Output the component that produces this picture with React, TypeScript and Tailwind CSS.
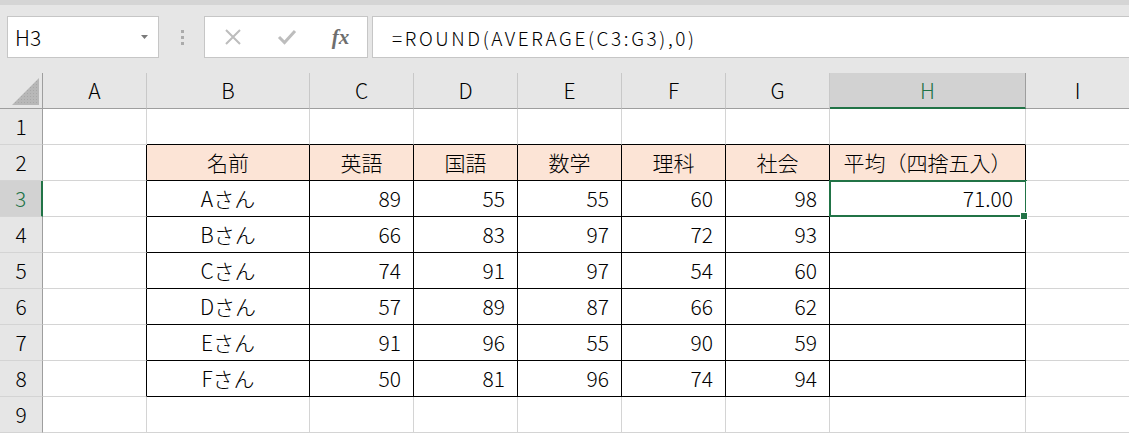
import React from "react";

const COLS = [
  { key: "A", w: "w-[104px]" },
  { key: "B", w: "w-[163px]" },
  { key: "C", w: "w-[104px]" },
  { key: "D", w: "w-[104px]" },
  { key: "E", w: "w-[104px]" },
  { key: "F", w: "w-[104px]" },
  { key: "G", w: "w-[104px]" },
  { key: "H", w: "w-[196px]" },
  { key: "I", w: "w-[104px]" },
];

const HEADERS = ["名前", "英語", "国語", "数学", "理科", "社会", "平均（四捨五入）"];
const DATA: [string, number[]][] = [
  ["Aさん", [89, 55, 55, 60, 98]],
  ["Bさん", [66, 83, 97, 72, 93]],
  ["Cさん", [74, 91, 97, 54, 60]],
  ["Dさん", [57, 89, 87, 66, 62]],
  ["Eさん", [91, 96, 55, 90, 59]],
  ["Fさん", [50, 81, 96, 74, 94]],
];

function cellContent(r: number, c: number): { text: string; align: "center" | "right" } | null {
  if (r === 2 && c >= 1 && c <= 7) return { text: HEADERS[c - 1], align: "center" };
  if (r >= 3 && r <= 8) {
    const row = DATA[r - 3];
    if (c === 1) return { text: row[0], align: "center" };
    if (c >= 2 && c <= 6) return { text: String(row[1][c - 2]), align: "right" };
    if (c === 7 && r === 3) return { text: "71.00", align: "right" };
  }
  return null;
}

function Cell({ r, c }: { r: number; c: number }) {
  const col = COLS[c];
  const inTableRow = r >= 2 && r <= 8;
  const rightBlack = inTableRow && c >= 0 && c <= 7;
  const bottomBlack = r >= 1 && r <= 8 && c >= 1 && c <= 7;
  const fill = r === 2 && c >= 1 && c <= 7;
  const content = cellContent(r, c);
  const selected = r === 3 && c === 7;
  return (
    <div
      className={`relative shrink-0 h-full ${col.w} border-r border-b ${
        rightBlack ? "border-r-black" : "border-r-[#d4d4d4]"
      } ${bottomBlack ? "border-b-black" : "border-b-[#d4d4d4]"} ${
        fill ? "bg-[#fce4d6]" : "bg-white"
      } flex items-center ${
        content?.align === "right" ? "justify-end pr-[12px]" : "justify-center"
      } text-[21px] text-black leading-none`}
    >
      {content ? <span>{content.text}</span> : null}
      {selected ? (
        <>
          <div className="absolute -left-[1px] -top-[1px] w-[198px] h-[37px] border-2 border-[#217346] pointer-events-none" />
          <div className="absolute -right-[3px] -bottom-[4px] w-[8px] h-[8px] bg-white flex items-center justify-center z-10">
            <div className="w-[6px] h-[6px] bg-[#217346]" />
          </div>
        </>
      ) : null}
    </div>
  );
}

function RowHeader({ n }: { n: number }) {
  const sel = n === 3;
  return (
    <div
      className={`shrink-0 w-[43px] h-full border-b border-b-[#d4d4d4] ${
        sel ? "bg-[#d2d2d2] border-r-2 border-r-[#217346] text-[#217346]" : "bg-[#e6e6e6] border-r border-r-[#9e9e9e] text-black"
      } flex items-center justify-center text-[21px] leading-none`}
    >
      {n}
    </div>
  );
}

export default function App() {
  return (
    <div className="w-[1129px] h-[433px] overflow-hidden bg-[#e6e6e6] font-['Noto_Sans_CJK_JP','Noto_Sans',sans-serif] font-light select-none">
      {/* toolbar */}
      <div className="h-[73px] flex flex-col">
        <div className="h-[5px] bg-[#d5d5d5]" />
        <div className="flex items-start pt-[11px]">
          <div className="ml-[7px] w-[152px] h-[42px] bg-white border border-[#c6c6c6] flex items-center justify-between pl-[7px] pr-[10px]">
            <span className="text-[21px] leading-none text-black">H3</span>
            <svg width="7" height="4" viewBox="0 0 7 4">
              <path d="M0 0 L7 0 L3.5 4 Z" fill="#7a7a7a" />
            </svg>
          </div>
          <div className="w-[45px] h-[42px] flex flex-col items-center justify-center gap-[3px] pl-[2px]">
            <div className="w-[3px] h-[3px] bg-[#ababab]" />
            <div className="w-[3px] h-[3px] bg-[#ababab]" />
            <div className="w-[3px] h-[3px] bg-[#ababab]" />
          </div>
          <div className="w-[164px] h-[42px] bg-white border border-[#c6c6c6] flex items-center">
            <div className="w-[55px] flex justify-center pl-[1px]">
              <svg width="18" height="18" viewBox="0 0 18 18">
                <path d="M2 2 L16 16 M16 2 L2 16" stroke="#bdbdbd" strokeWidth="2" fill="none" />
              </svg>
            </div>
            <div className="w-[54px] flex justify-center">
              <svg width="20" height="18" viewBox="0 0 20 18">
                <path d="M2 9 L7.5 14.5 L18 3" stroke="#bdbdbd" strokeWidth="3" fill="none" />
              </svg>
            </div>
            <div className="w-[53px] flex justify-center">
              <span className="font-['Liberation_Serif',serif] italic font-bold text-[21px] leading-none text-[#6e6e6e]">
                fx
              </span>
            </div>
          </div>
          <div className="ml-[4px] flex-1 h-[42px] bg-white border border-[#c6c6c6] border-r-0 flex items-center pl-[19px]">
            <span className="text-[19px] leading-none text-black tracking-[2.6px]">=ROUND(AVERAGE(C3:G3),0)</span>
          </div>
        </div>
      </div>

      {/* column header row */}
      <div className="flex h-[36px]">
        <div className="relative shrink-0 w-[43px] h-full bg-[#e6e6e6] border-r border-b border-[#9e9e9e]">
          <svg className="absolute left-[12px] top-[5px]" width="27" height="27" viewBox="0 0 27 27">
            <defs>
              <pattern id="dots" width="3" height="3" patternUnits="userSpaceOnUse">
                <rect width="3" height="3" fill="#b8b8b8" />
                <rect width="1" height="1" fill="#a8a8a8" />
              </pattern>
            </defs>
            <path d="M27 0 L27 27 L0 27 Z" fill="url(#dots)" />
          </svg>
        </div>
        {COLS.map((col, i) => {
          const sel = col.key === "H";
          return (
            <div
              key={col.key}
              className={`shrink-0 h-full ${col.w} ${
                sel
                  ? "bg-[#d2d2d2] border-b-2 border-b-[#217346] border-r border-r-[#9e9e9e] text-[#217346]"
                  : "bg-[#e6e6e6] border-b border-b-[#9e9e9e] border-r border-r-[#c8c8c8] text-black"
              } ${i === 6 ? "border-r-[#9e9e9e]" : ""} flex items-center justify-center text-[21px] leading-none`}
            >
              {col.key}
            </div>
          );
        })}
      </div>

      {/* rows */}
      {[1, 2, 3, 4, 5, 6, 7, 8, 9].map((r) => (
        <div key={r} className="flex h-[36px]">
          <RowHeader n={r} />
          {COLS.map((_, c) => (
            <Cell key={c} r={r} c={c} />
          ))}
        </div>
      ))}
    </div>
  );
}
